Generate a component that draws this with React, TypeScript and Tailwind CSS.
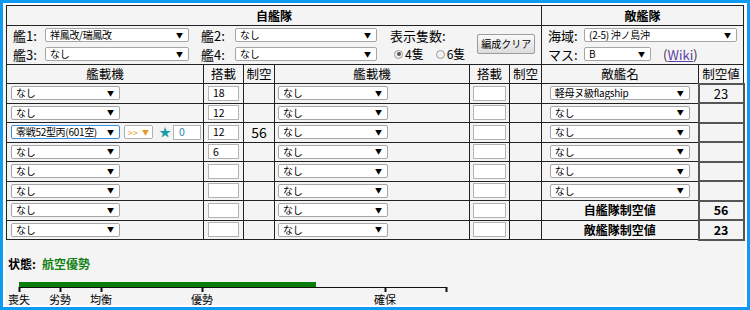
import React from 'react';

const font = { fontFamily: '"Noto Sans CJK JP", "Noto Sans", "Liberation Sans", sans-serif' };

function Sel({ text, className = '', focus = false }: { text: string; className?: string; focus?: boolean }) {
  return (
    <div
      className={`inline-flex items-center justify-between h-[14px] bg-white border rounded-[2px] pl-[4px] pr-[5px] text-[10px] leading-none text-black align-middle overflow-hidden ${
        focus ? 'border-[#3b8ee0]' : 'border-[#a6a6a6]'
      } ${className}`}
    >
      <span className="whitespace-nowrap tracking-[-0.3px]">{text}</span>
      <span className="text-[7px] ml-1 shrink-0">▼</span>
    </div>
  );
}

function Inp({ value = '', className = '' }: { value?: string; className?: string }) {
  return (
    <div
      className={`inline-flex items-center h-[15px] bg-white border border-[#b3b3b3] pl-[4px] text-[10.5px] leading-none text-black align-middle ${className}`}
    >
      {value}
    </div>
  );
}

const rows = [
  { plane: 'なし', load: '18', air: '', enemy: '軽母ヌ級flagship', ev: '23' },
  { plane: 'なし', load: '12', air: '', enemy: 'なし', ev: '' },
  { plane: '零戦52型丙(601空)', load: '12', air: '56', enemy: 'なし', ev: '', special: true },
  { plane: 'なし', load: '6', air: '', enemy: 'なし', ev: '' },
  { plane: 'なし', load: '', air: '', enemy: 'なし', ev: '' },
  { plane: 'なし', load: '', air: '', enemy: 'なし', ev: '' },
  { plane: 'なし', load: '', air: '', total: '自艦隊制空値', tv: '56' },
  { plane: 'なし', load: '', air: '', total: '敵艦隊制空値', tv: '23' },
];

const ticks = [
  { x: 18, label: '喪失' },
  { x: 59, label: '劣勢' },
  { x: 100, label: '均衡' },
  { x: 201, label: '優勢' },
  { x: 384, label: '確保' },
];

export default function App() {
  return (
    <div className="w-[750px] h-[310px] border-[3px] border-[#0f9bf2] bg-white p-[2px]" style={font}>
      <div className="h-full bg-[#f4f4f4] pl-px overflow-hidden">
        <table className="table-fixed w-[737px] text-black text-[11px] leading-none">
          <colgroup>
            <col className="w-[197px]" />
            <col className="w-[40px]" />
            <col className="w-[31px]" />
            <col className="w-[195px]" />
            <col className="w-[40px]" />
            <col className="w-[32px]" />
            <col className="w-[157px]" />
            <col className="w-[45px]" />
          </colgroup>
          <tbody>
            <tr className="h-[20px]">
              <th colSpan={6} className="border border-[#222] text-[12px] font-bold">自艦隊</th>
              <th colSpan={2} className="border border-[#222] text-[12px] font-bold">敵艦隊</th>
            </tr>
            <tr className="h-[39px]">
              <td colSpan={6} className="border border-[#222] align-top">
                <div className="flex pl-[6px] pt-[2px] text-[13px] leading-none">
                  <div className="flex flex-col gap-[5px]">
                    <div className="flex items-center gap-[4px]">
                      <span className="w-[28px]">艦1:</span>
                      <Sel text="祥鳳改/瑞鳳改" className="w-[144px]" />
                      <span className="w-[30px] ml-[8px]">艦2:</span>
                      <Sel text="なし" className="w-[142px]" />
                    </div>
                    <div className="flex items-center gap-[4px]">
                      <span className="w-[28px]">艦3:</span>
                      <Sel text="なし" className="w-[144px]" />
                      <span className="w-[30px] ml-[8px]">艦4:</span>
                      <Sel text="なし" className="w-[142px]" />
                    </div>
                  </div>
                  <div className="flex flex-col gap-[6px] ml-[13px] pt-px">
                    <span>表示隻数:</span>
                    <div className="flex items-center text-[12px]">
                      <span className="w-[9px] h-[9px] rounded-full border border-[#9a9a9a] bg-[#f0f0f0] flex items-center justify-center ml-[4px]">
                        <span className="w-[4px] h-[4px] rounded-full bg-[#555]" />
                      </span>
                      <span className="ml-[2px]">4隻</span>
                      <span className="w-[9px] h-[9px] rounded-full border border-[#9a9a9a] bg-[#f0f0f0] ml-[12px]" />
                      <span className="ml-[2px]">6隻</span>
                    </div>
                  </div>
                  <div className="ml-[12px] mt-[6px] h-[20px] w-[58px] border border-[#9c9c9c] rounded-[2px] bg-gradient-to-b from-[#fafafa] to-[#dcdcdc] text-[10px] flex items-center justify-center">
                    編成クリア
                  </div>
                </div>
              </td>
              <td colSpan={2} className="border border-[#222] align-top">
                <div className="flex flex-col gap-[5px] pl-[6px] pt-[2px] text-[13px] leading-none">
                  <div className="flex items-center">
                    <span className="w-[36px]">海域:</span>
                    <Sel text="(2-5) 沖ノ島沖" className="w-[153px]" />
                  </div>
                  <div className="flex items-center">
                    <span className="w-[36px]">マス:</span>
                    <Sel text="B" className="w-[67px]" />
                    <span className="ml-[12px] text-[#333]">
                      (<span className="text-[#5b3ea6] underline">Wiki</span>)
                    </span>
                  </div>
                </div>
              </td>
            </tr>
            <tr className="h-[19px] text-[12.5px]">
              <td className="border border-[#222] text-center">艦載機</td>
              <td className="border border-[#222] text-center">搭載</td>
              <td className="border border-[#222] text-center">制空</td>
              <td className="border border-[#222] text-center">艦載機</td>
              <td className="border border-[#222] text-center">搭載</td>
              <td className="border border-[#222] text-center">制空</td>
              <td className="border border-[#222] text-center">敵艦名</td>
              <td className="border border-[#222] text-center">制空値</td>
            </tr>
            {rows.map((r, i) => (
              <tr key={i} className="h-[19.5px]">
                <td className="border border-[#222] pl-[4px]">
                  <div className="flex items-center">
                    <Sel text={r.plane} focus={r.special} className="w-[109px]" />
                    {r.special && (
                      <>
                        <div className="ml-[4px] inline-flex items-center justify-between h-[14px] w-[29px] bg-white border border-[#b0b0b0] rounded-[2px] px-[3px] text-[9px] leading-none text-[#e8961c]">
                          <span>&gt;&gt;</span>
                          <span className="text-[7px]">▼</span>
                        </div>
                        <span className="ml-[6px] text-[12px] leading-none text-[#1f9aa6]">★</span>
                        <div className="ml-[2px] inline-flex items-center h-[15px] w-[28px] bg-white border border-[#b3b3b3] pl-[5px] text-[10.5px] leading-none text-[#2b8aa8]">
                          0
                        </div>
                      </>
                    )}
                  </div>
                </td>
                <td className="border border-[#222] pl-[4px]">
                  <Inp value={r.load} className="w-[31px]" />
                </td>
                <td className="border border-[#222] text-center text-[14px]">{r.air}</td>
                <td className="border border-[#222] pl-[3px]">
                  <Sel text="なし" className="w-[110px]" />
                </td>
                <td className="border border-[#222] text-center">
                  <Inp className="w-[33px]" />
                </td>
                <td className="border border-[#222]" />
                {r.total ? (
                  <>
                    <td className="border border-[#222] text-center text-[12px] font-bold">{r.total}</td>
                    <td className="border-[2px] border-[#555] text-center text-[12.5px] font-bold">{r.tv}</td>
                  </>
                ) : (
                  <>
                    <td className="border border-[#222] text-center">
                      <Sel text={r.enemy!} className="w-[140px] text-left" />
                    </td>
                    <td className="border-[2px] border-[#555] text-center text-[13px]">{r.ev}</td>
                  </>
                )}
              </tr>
            ))}
          </tbody>
        </table>
        <div className="mt-[17px] ml-[2px] flex text-[12px] font-bold leading-none">
          <span>状態:</span>
          <span className="ml-[6px] text-[#128012]">航空優勢</span>
        </div>
        <div className="relative h-[36px] mt-[8px] text-[11px] leading-none">
          <svg width="460" height="20" className="absolute left-0 top-0">
            <rect x="13" y="4" width="297" height="5" fill="#0a7d0a" />
            <line x1="13" y1="9.5" x2="440" y2="9.5" stroke="#111" strokeWidth="1" />
            {[13, 54, 95, 196, 379, 440].map((x) => (
              <line key={x} x1={x + 0.5} y1="9" x2={x + 0.5} y2="14" stroke="#111" strokeWidth="2" />
            ))}
          </svg>
          {ticks.map((t) => (
            <span key={t.label} className="absolute top-[16px] -translate-x-1/2" style={{ left: t.x - 5 }}>
              {t.label}
            </span>
          ))}
        </div>
      </div>
    </div>
  );
}
